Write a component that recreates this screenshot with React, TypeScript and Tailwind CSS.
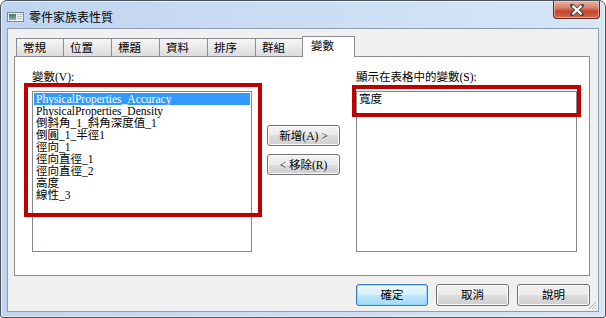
import React from "react";

const tabs = ["常規", "位置", "標題", "資料", "排序", "群組"];

const variables = [
  "PhysicalProperties_Accuracy",
  "PhysicalProperties_Density",
  "倒斜角_1_斜角深度值_1",
  "倒圓_1_半徑1",
  "徑向_1",
  "徑向直徑_1",
  "徑向直徑_2",
  "高度",
  "線性_3",
];

const serif = "font-['Liberation_Serif','Noto_Sans_CJK_TC',serif] text-[11.5px] leading-[12px]";

function WinButton({ label, isDefault, className }: { label: string; isDefault?: boolean; className?: string }) {
  return (
    <button
      className={`flex items-center justify-center rounded-[3px] border ${
        isDefault
          ? "border-[#3c7fb1] shadow-[inset_0_0_0_1px_#8fd6f6] bg-[linear-gradient(to_bottom,#eaf6fd_0%,#d9f0fc_50%,#bee6fd_50%,#a7d9f5_100%)]"
          : "border-[#707070] shadow-[inset_0_0_0_1px_#fcfcfc] bg-[linear-gradient(to_bottom,#f2f2f2_0%,#ebebeb_50%,#dddddd_50%,#cfcfcf_100%)]"
      } text-black ${serif} ${className ?? ""}`}
    >
      {label}
    </button>
  );
}

function TitleIcon() {
  return (
    <svg width="17" height="10" viewBox="0 0 17 10">
      <rect x="0.5" y="0.5" width="16" height="9" fill="#eef1f3" stroke="#7b8792" />
      <defs>
        <linearGradient id="tg" x1="0" y1="0" x2="0" y2="1">
          <stop offset="0" stopColor="#3f6f66" />
          <stop offset="1" stopColor="#8fb8a9" />
        </linearGradient>
      </defs>
      <rect x="2" y="2" width="7" height="6" fill="url(#tg)" />
      <rect x="10" y="2" width="5" height="1" fill="#b7c0c8" />
      <rect x="10" y="4" width="5" height="1" fill="#b7c0c8" />
      <rect x="10" y="6" width="5" height="1" fill="#b7c0c8" />
    </svg>
  );
}

function CloseButton() {
  return (
    <div className="flex h-[18px] w-[47px] items-center justify-center self-start rounded-b-[4px] border border-t-0 border-[#5b2b25] bg-[linear-gradient(to_bottom,#eab3a4_0%,#d9826d_40%,#c4462c_60%,#d06a52_100%)] shadow-[inset_0_0_0_1px_rgba(255,220,210,0.5)]">
      <svg width="14" height="12" viewBox="0 0 14 12">
        <path
          d="M2 1.5 L12 10.5 M12 1.5 L2 10.5"
          stroke="#4a4a4a"
          strokeWidth="4"
          strokeLinecap="square"
          fill="none"
        />
        <path d="M2.5 1.8 L11.5 10.2 M11.5 1.8 L2.5 10.2" stroke="#ffffff" strokeWidth="2.2" fill="none" />
      </svg>
    </div>
  );
}

export default function App() {
  return (
    <div className="h-[318px] w-[606px] bg-white">
      <div className="relative flex h-[318px] w-[606px] flex-col rounded-t-[7px] rounded-b-[3px] border border-[#4b525c] bg-[linear-gradient(to_right,#bfd5ef,#d6e6f7)] px-[6px] pb-[5px] shadow-[inset_0_0_0_1px_rgba(255,255,255,0.55)]">
        {/* title bar */}
        <div className="flex h-[27px] items-start">
          <div className="mt-[9px] flex items-center">
            <TitleIcon />
            <span className="ml-[5px] font-['Noto_Sans_CJK_TC',sans-serif] text-[12px] leading-[14px] text-black">
              零件家族表性質
            </span>
          </div>
          <div className="-mr-[1px] ml-auto">
            <CloseButton />
          </div>
        </div>

        {/* client area */}
        <div className="relative flex flex-1 flex-col border border-[#8e9cb0] bg-[#f0f0f0] pl-[6px] pr-[8px] pt-[7px]">
          <div className="flex items-end pl-[2px]">
            {tabs.map((t, i) => (
              <div
                key={t}
                className={`flex h-[18px] items-center border border-b-0 border-[#898c95] bg-[linear-gradient(to_bottom,#f6f6f6,#e9e9e9_50%,#dcdcdc)] pl-[6px] ${
                  i === 0 ? "w-[48px]" : "-ml-[1px] w-[49px]"
                } ${serif} text-black`}
              >
                {t}
              </div>
            ))}
            <div className={`relative z-10 -mb-[1px] -ml-[2px] flex h-[21px] w-[53px] items-center border border-b-0 border-[#898c95] bg-white pl-[8px] pb-[2px] ${serif}`}>
              變數
            </div>
          </div>

          <div className="relative flex h-[220px] border border-[#898c95] bg-white pl-[17px] pt-[13px]">
            <div className="flex w-[220px] flex-col">
              <div className={`h-[14px] ${serif} leading-[14px]`}>變數(V):</div>
              <div className="mt-[7px] h-[161px] border border-[#828790] p-[1px]">
                {variables.map((v, i) => (
                  <div
                    key={v}
                    className={`h-[12px] whitespace-nowrap pl-[2px] ${serif} ${
                      i === 0 ? "bg-[#3399ff] text-white" : "text-black"
                    }`}
                  >
                    {v}
                  </div>
                ))}
              </div>
            </div>

            <div className="ml-[15px] flex w-[73px] flex-col gap-[8px] pt-[55px]">
              <WinButton label="新增(A) >" className="h-[21px] w-[73px]" />
              <WinButton label="< 移除(R)" className="h-[21px] w-[73px]" />
            </div>

            <div className="ml-[16px] flex w-[221px] flex-col">
              <div className={`h-[14px] ${serif} leading-[14px]`}>顯示在表格中的變數(S):</div>
              <div className="mt-[7px] h-[161px] border border-[#828790] pl-[2px] pt-[1px]">
                <div className={`h-[12px] ${serif}`}>寬度</div>
              </div>
            </div>

            {/* annotation boxes */}
            <div className="absolute left-[9px] top-[26px] h-[134px] w-[238px] border-[4px] border-[#c00000]" />
            <div className="absolute left-[337px] top-[28px] h-[32px] w-[229px] border-[4px] border-[#c00000]" />
          </div>

          <div className="mt-[8px] flex justify-end gap-[8px]">
            <WinButton label="確定" isDefault className="h-[22px] w-[72px]" />
            <WinButton label="取消" className="h-[22px] w-[73px]" />
            <WinButton label="說明" className="h-[22px] w-[73px]" />
          </div>

          <svg className="absolute bottom-[1px] right-[1px]" width="10" height="10" viewBox="0 0 10 10">
            <path d="M9 2 L2 9 M9 5 L5 9 M9 8 L8 9" stroke="#a0a8b3" strokeWidth="1" />
            <path d="M10 3 L3 10 M10 6 L6 10" stroke="#ffffff" strokeWidth="1" />
          </svg>
        </div>
      </div>
    </div>
  );
}
